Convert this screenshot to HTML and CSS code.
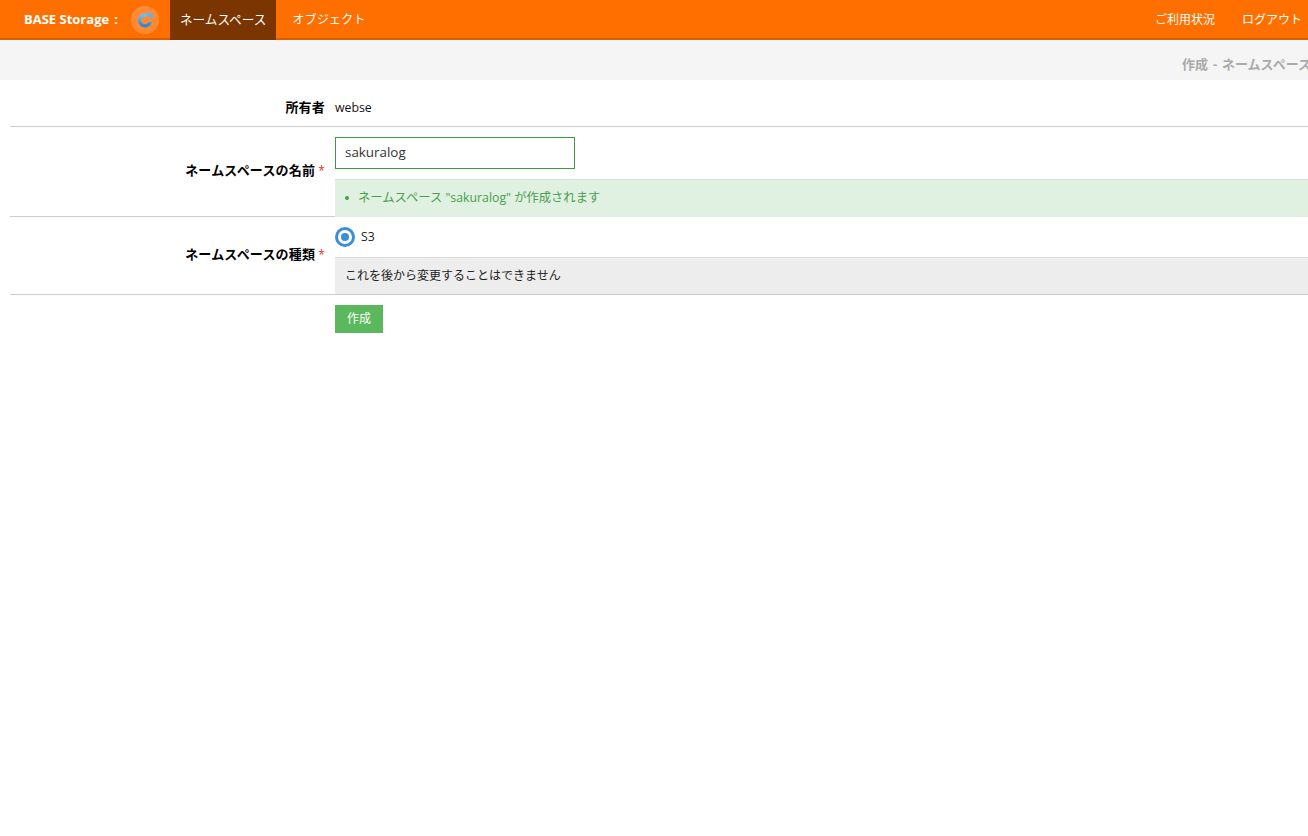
FILE: index.html
```html
<!DOCTYPE html>
<html lang="ja">
<head>
<meta charset="utf-8">
<title>BASE Storage</title>
<link rel="stylesheet" href="styles.css">
</head>
<body>
<header class="topbar">
  <div class="brand">BASE Storage<span class="colon">:</span></div>
  <div class="refresh">
    <svg width="16" height="16" viewBox="0 0 16 16" aria-hidden="true">
      <defs><linearGradient id="g" x1="0" y1="0" x2="0" y2="1"><stop offset="0" stop-color="#6cc2f2"/><stop offset="1" stop-color="#2f86cc"/></linearGradient></defs>
      <path d="M13.2 9.8A5.4 5.4 0 1 1 10 3.4" fill="none" stroke="url(#g)" stroke-width="3.2"/>
      <path d="M8.4 .8 15.4 1 15 8z" fill="#5cb6ec"/>
    </svg>
  </div>
  <nav class="nav">
    <a class="nav-item active">ネームスペース</a>
    <a class="nav-item nav-item-narrow">オブジェクト</a>
  </nav>
  <nav class="nav nav-right">
    <a class="nav-item">ご利用状況</a>
    <a class="nav-item">ログアウト</a>
  </nav>
</header>
<div class="subheader"><span>作成 - ネームスペース</span></div>
<main class="form">
  <div class="row row-owner">
    <div class="label">所有者</div>
    <div class="value">webse</div>
  </div>
  <div class="row row-name">
    <div class="label label-mid">ネームスペースの名前<span class="req">*</span></div>
    <div class="value">
      <div class="input-wrap"><input class="input" type="text" value="sakuralog"></div>
      <ul class="hint-ok"><li>ネームスペース "sakuralog" が作成されます</li></ul>
    </div>
  </div>
  <div class="row row-type">
    <div class="label label-mid">ネームスペースの種類<span class="req">*</span></div>
    <div class="value">
      <div class="radio-line"><span class="radio"></span><span>S3</span></div>
      <div class="hint-gray">これを後から変更することはできません</div>
    </div>
  </div>
  <div class="actions"><button class="btn" type="button">作成</button></div>
</main>
</body>
</html>
```
FILE: styles.css
```css
* { box-sizing: border-box; }
html, body { margin: 0; padding: 0; height: 100%; overflow: hidden; }
body {
  background: #fff;
  color: #222;
  font-family: "Open Sans", "Noto Sans CJK JP", sans-serif;
  font-size: 12.3px;
}
.topbar {
  display: flex;
  align-items: stretch;
  height: 40px;
  background: #ff6f00;
  border-bottom: 2px solid #d65f00;
  color: #fff;
  padding-left: 24px;
}
.brand {
  font-weight: 700;
  font-size: 13px;
  line-height: 39px;
  width: 107px;
  white-space: nowrap;
}
.colon { margin-left: 5px; }
.refresh {
  width: 28px;
  height: 28px;
  margin-top: 6px;
  border-radius: 50%;
  background: #ff8a33;
  display: flex;
  align-items: center;
  justify-content: center;
}
.nav { display: flex; margin-left: 11px; font-size: 12.6px; }
.nav-right { margin-left: auto; font-size: 12px; }
.nav-item {
  height: 40px;
  line-height: 39px;
  padding: 0 10px;
  color: #fff;
  white-space: nowrap;
}
.nav-item-narrow { font-size: 12.2px; }
.nav .nav-item + .nav-item { margin-left: 6px; }
.nav-right .nav-item { padding: 0 6px 0 0; }
.nav-right .nav-item + .nav-item { margin-left: 21px; }
.active { background: #7a3500; }
.subheader {
  height: 40px;
  background: #f5f5f5;
  padding-left: 1182px;
  line-height: 48px;
  font-size: 13px;
  word-spacing: 1.5px;
  font-weight: 700;
  color: #aaa;
  white-space: nowrap;
  overflow: hidden;
}
.form { padding-left: 10px; }
.row {
  display: grid;
  grid-template-columns: 315px 1fr;
  column-gap: 10px;
  border-bottom: 1px solid #ccc;
}
.row-owner { height: 47px; align-items: center; padding-top: 7px; }
.row-name { height: 90px; }
.row-type { height: 78px; }
.label {
  text-align: right;
  font-size: 13px;
  letter-spacing: 0.2px;
  font-weight: 700;
  color: #000;
  white-space: nowrap;
}
.label-mid { align-self: center; }
.row-name .label-mid { padding-bottom: 6px; }
.row-type .label-mid { padding-bottom: 4px; }
.req { color: #d9342b; margin-left: 3px; font-weight: 400; font-size: 12px; }
.value { min-width: 0; color: #222; }
.row-owner .value { color: #111; font-size: 12.3px; padding-top: 1px; }
.input-wrap { padding-top: 10px; height: 52px; }
.input {
  display: block;
  width: 240px;
  height: 32px;
  border: 1px solid #3f9a42;
  padding: 0 9px 2px;
  font: inherit;
  font-size: 13.4px;
  color: #333;
  background: #fff;
  outline: none;
}
.hint-ok {
  margin: 0;
  height: 38px;
  padding: 0 0 0 23px;
  list-style: none;
  background: #e0f0e1;
  border-top: 1px solid #d3e8d4;
  color: #4a9e4e;
  line-height: 36px;
  position: relative;
}
.hint-ok li::before {
  content: "";
  position: absolute;
  left: 10px;
  top: 16px;
  width: 4px;
  height: 4px;
  border-radius: 50%;
  background: #43a047;
}
.radio-line {
  display: flex;
  align-items: center;
  gap: 6px;
  height: 40px;
  padding-bottom: 1px;
}
.radio {
  width: 20px;
  height: 20px;
  border-radius: 50%;
  border: 3px solid #3b8ed8;
  background: #fff;
  position: relative;
}
.radio::after {
  content: "";
  position: absolute;
  left: 3px;
  top: 3px;
  width: 8px;
  height: 8px;
  border-radius: 50%;
  background: #3b8ed8;
}
.hint-gray {
  height: 37px;
  line-height: 35px;
  background: #ededed;
  border-top: 1px solid #ddd;
  padding-left: 10px;
  font-size: 12px;
}
.actions { padding: 10px 0 0 325px; }
.btn {
  display: block;
  width: 48px;
  height: 28px;
  border: 0;
  padding: 0 0 3px;
  background: #5cb85c;
  color: #fff;
  font: inherit;
  font-size: 12px;
}
```
